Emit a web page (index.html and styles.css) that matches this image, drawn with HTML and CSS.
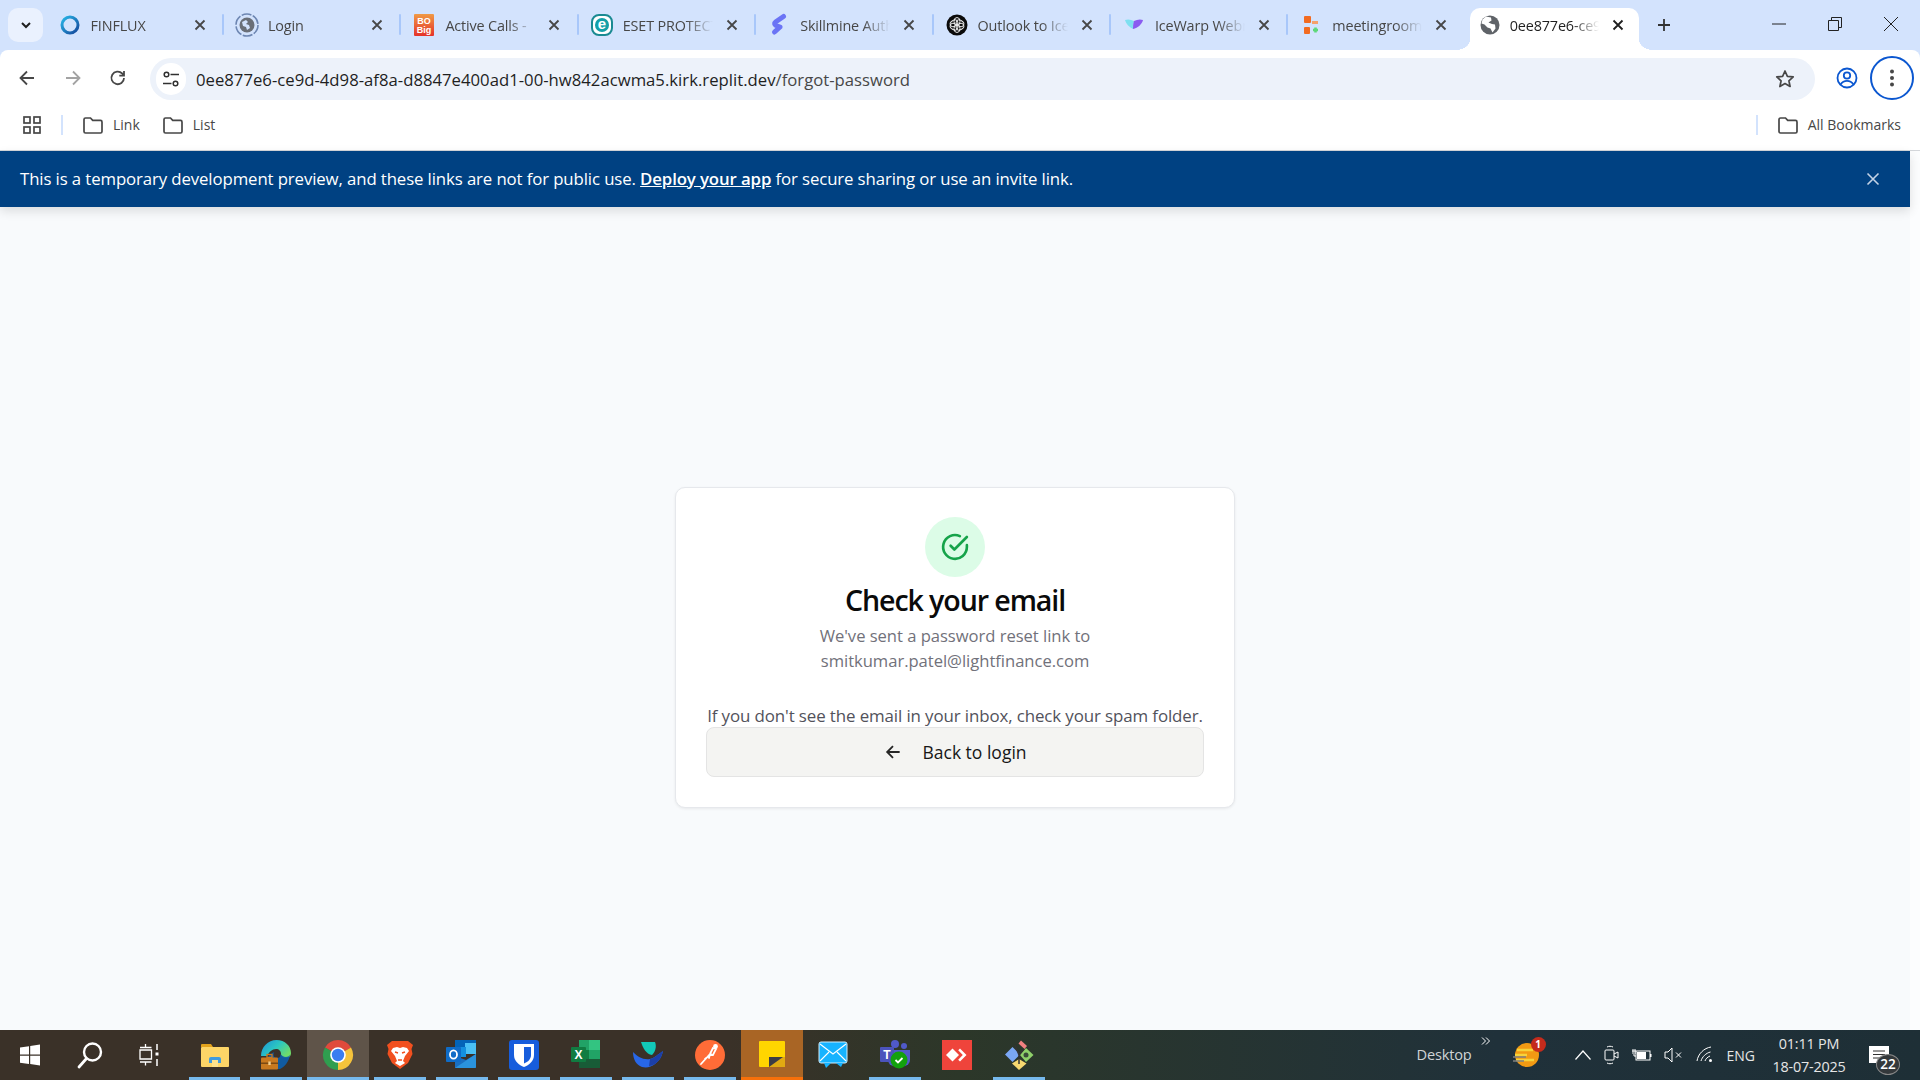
FILE: index.html
```html
<!DOCTYPE html>
<html lang="en">
<head>
<meta charset="utf-8">
<title>Check your email</title>
<link rel="stylesheet" href="styles.css">
</head>
<body>
<svg class="defs" width="0" height="0" aria-hidden="true">
  <defs>
    <symbol id="x" viewBox="0 0 16 16"><path d="M3.5 3.5l9 9M12.5 3.5l-9 9" fill="none" stroke="currentColor" stroke-width="1.8"/></symbol>
    <symbol id="folder" viewBox="0 0 22 20"><path d="M2 4.5a1.5 1.5 0 0 1 1.5-1.5h5l2.2 2.4h7.8a1.5 1.5 0 0 1 1.5 1.5v9.6a1.5 1.5 0 0 1-1.5 1.5h-15a1.5 1.5 0 0 1-1.5-1.5z" fill="none" stroke="#474747" stroke-width="1.7"/></symbol>
    <linearGradient id="ff" x1="0" y1="0" x2="1" y2="1"><stop offset="0" stop-color="#27b7e8"/><stop offset="1" stop-color="#15479b"/></linearGradient>
    <linearGradient id="bo" x1="0" y1="0" x2="0" y2="1"><stop offset="0" stop-color="#f09a45"/><stop offset="1" stop-color="#e5322a"/></linearGradient>
    <linearGradient id="edge" x1="0" y1="0" x2="1" y2="0.6"><stop offset="0" stop-color="#1c8fd8"/><stop offset="0.55" stop-color="#2bc7c0"/><stop offset="1" stop-color="#6fdc6a"/></linearGradient>
  </defs>
</svg>

<header class="tabstrip">
  <button class="tab-search"><svg width="14" height="14" viewBox="0 0 14 14"><path d="M3 5l4 4 4-4" fill="none" stroke="#1f1f1f" stroke-width="2"/></svg></button>
  <div class="tab">
    <svg class="fav" viewBox="0 0 24 24"><circle cx="12" cy="12" r="8" fill="none" stroke="url(#ff)" stroke-width="3"/></svg>
    <span class="tab-title">FINFLUX</span><svg class="tab-x"><use href="#x"/></svg>
  </div>
  <div class="tab">
    <svg class="fav" viewBox="0 0 24 24"><circle cx="12" cy="12" r="11" fill="none" stroke="#6d86b2" stroke-width="1.6" stroke-dasharray="10 1.5"/><circle cx="12" cy="12" r="7.5" fill="#6a6f78"/><path d="M7 9l4-2 2 2-2 2 3 1 1 3-3 2-1-3-3-1z" fill="#d3e3fd"/></svg>
    <span class="tab-title">Login</span><svg class="tab-x"><use href="#x"/></svg>
  </div>
  <div class="tab">
    <svg class="fav" viewBox="0 0 24 24"><rect x="2" y="1" width="20" height="22" rx="1" fill="url(#bo)"/><text class="bo-text" x="12" y="10.500">BO</text><text class="bo-text" x="12" y="19.500">Big</text></svg>
    <span class="tab-title">Active Calls -</span><svg class="tab-x"><use href="#x"/></svg>
  </div>
  <div class="tab">
    <svg class="fav" viewBox="0 0 24 24"><rect x="2" y="2" width="20" height="20" rx="7" fill="#fff" stroke="#1a8a92" stroke-width="2"/><circle cx="12" cy="12" r="7" fill="#14a0a8"/><text class="eset-text" x="12" y="16">e</text></svg>
    <span class="tab-title">ESET PROTECT</span><svg class="tab-x"><use href="#x"/></svg>
  </div>
  <div class="tab">
    <svg class="fav" viewBox="0 0 24 24"><path d="M16.500 3.500L8.500 9c-1.500 1-1 2.500.5 3.500l4 1.500-5.500 5" fill="none" stroke="#6b74f5" stroke-width="5" stroke-linecap="round" stroke-linejoin="round"/></svg>
    <span class="tab-title">Skillmine Authentication</span><svg class="tab-x"><use href="#x"/></svg>
  </div>
  <div class="tab">
    <svg class="fav" viewBox="0 0 24 24"><circle cx="12" cy="12" r="10.500" fill="#0b0b0b"/><g fill="none" stroke="#e8e8e8" stroke-width="1"><ellipse cx="12" cy="8.500" rx="3" ry="4"/><ellipse cx="12" cy="15.500" rx="3" ry="4"/><ellipse cx="9" cy="10.300" rx="3" ry="4" transform="rotate(60 9 10.300)"/><ellipse cx="15" cy="13.700" rx="3" ry="4" transform="rotate(60 15 13.700)"/><ellipse cx="15" cy="10.300" rx="3" ry="4" transform="rotate(-60 15 10.300)"/><ellipse cx="9" cy="13.700" rx="3" ry="4" transform="rotate(-60 9 13.700)"/></g></svg>
    <span class="tab-title">Outlook to IceWarp</span><svg class="tab-x"><use href="#x"/></svg>
  </div>
  <div class="tab">
    <svg class="fav" viewBox="0 0 24 24"><path d="M3 7c3-1 6-.5 9 1l-1 8C7 14 4 11 3 7z" fill="#7ee0f0"/><path d="M21 7c-3-1-6-.5-9 1-1 3-1 6-1 8 5-1 9-5 10-9z" fill="#8a5cf0"/></svg>
    <span class="tab-title">IceWarp Webmail</span><svg class="tab-x"><use href="#x"/></svg>
  </div>
  <div class="tab tab-last">
    <svg class="fav" viewBox="0 0 24 24"><rect x="5" y="3" width="7" height="7" rx="1" fill="#f26b21"/><rect x="13" y="8" width="6" height="3" fill="#f5a06b"/><rect x="5" y="14" width="6" height="7" rx="1" fill="#f26b21"/><path d="M14 17h5M16.500 14.500v5" stroke="#5dd879" stroke-width="2.600"/></svg>
    <span class="tab-title">meetingroom</span><svg class="tab-x"><use href="#x"/></svg>
  </div>
  <div class="tab tab-active">
    <svg class="fav" viewBox="0 0 24 24"><circle cx="12" cy="12" r="9.500" fill="#5f6368"/><path d="M8 3.500l5 1 .5 3-3 2 3.500 1.500 3 .5.5 4-3 4-2-4-3-1-3-3-3-1 1-4z" fill="#fff"/></svg>
    <span class="tab-title">0ee877e6-ce9d-4d98</span><svg class="tab-x"><use href="#x"/></svg>
  </div>
  <button class="new-tab"><svg width="16" height="16" viewBox="0 0 16 16"><path d="M8 2v12M2 8h12" stroke="#333" stroke-width="1.800"/></svg></button>
  <div class="win-controls">
    <svg width="14" height="14" viewBox="0 0 14 14"><path d="M0 7h14" stroke="#222" stroke-width="1"/></svg>
    <svg width="14" height="14" viewBox="0 0 14 14"><path d="M.5 3.500h10v10H.5zM3.500 3.500V.5h10v10h-3" fill="none" stroke="#222" stroke-width="1"/></svg>
    <svg width="16" height="16" viewBox="0 0 16 16"><path d="M1 1l14 14M15 1L1 15" stroke="#222" stroke-width="1"/></svg>
  </div>
</header>

<nav class="toolbar">
  <div class="nav-btns">
    <svg width="20" height="20" viewBox="0 0 20 20"><path d="M17 10H4M10 3.500L3.500 10l6.500 6.500" fill="none" stroke="#474747" stroke-width="1.800"/></svg>
    <svg width="20" height="20" viewBox="0 0 20 20"><path d="M3 10h13M10 3.500l6.500 6.500-6.500 6.500" fill="none" stroke="#a3a3a3" stroke-width="1.800"/></svg>
    <svg width="20" height="20" viewBox="0 0 20 20"><path d="M16 10a6.300 6.300 0 1 1-1.800-4.500L16 7.500M16 3v4.700h-4.700" fill="none" stroke="#474747" stroke-width="1.800"/></svg>
  </div>
  <div class="omnibox">
    <span class="site-chip"><svg width="18" height="18" viewBox="0 0 18 18"><g fill="none" stroke="#303030" stroke-width="1.500"><circle cx="4.500" cy="4.500" r="2.300"/><path d="M8.500 4.500H17M1 13.500h8.500"/><circle cx="13.500" cy="13.500" r="2.300"/></g></svg></span>
    <span class="url">0ee877e6-ce9d-4d98-af8a-d8847e400ad1-00-hw842acwma5.kirk.replit.dev<span class="url-path">/forgot-password</span></span>
    <svg class="star" width="22" height="22" viewBox="0 0 22 22"><path d="M11 3l2.400 5.300 5.800.6-4.300 3.900 1.200 5.700L11 15.600l-5.100 2.900 1.200-5.700-4.300-3.900 5.800-.6z" fill="none" stroke="#474747" stroke-width="1.700" stroke-linejoin="round"/></svg>
  </div>
  <svg class="profile" width="24" height="24" viewBox="0 0 24 24"><g fill="none" stroke="#0b57d0" stroke-width="1.800"><circle cx="12" cy="12" r="9.500"/><circle cx="12" cy="9.500" r="3.200"/><path d="M5.500 18.500c2-3 4-3.700 6.500-3.700s4.500.7 6.500 3.700"/></g></svg>
  <button class="menu-btn"><svg width="6" height="20" viewBox="0 0 6 20"><circle cx="3" cy="3.500" r="2" fill="#474747"/><circle cx="3" cy="10" r="2" fill="#474747"/><circle cx="3" cy="16.500" r="2" fill="#474747"/></svg></button>
</nav>

<div class="bookmarks">
  <svg width="20" height="20" viewBox="0 0 20 20" class="apps"><g fill="none" stroke="#474747" stroke-width="1.700"><rect x="2" y="2" width="6" height="6"/><rect x="12" y="2" width="6" height="6"/><rect x="2" y="12" width="6" height="6"/><rect x="12" y="12" width="6" height="6"/></g></svg>
  <span class="bm-sep"></span>
  <span class="bm"><svg class="bm-folder"><use href="#folder"/></svg><span class="bm-label">Link</span></span>
  <span class="bm"><svg class="bm-folder"><use href="#folder"/></svg><span class="bm-label">List</span></span>
  <span class="bm-sep bm-sep-right"></span>
  <span class="bm bm-all"><svg class="bm-folder"><use href="#folder"/></svg><span class="bm-label">All Bookmarks</span></span>
</div>

<div class="viewport">
  <div class="page">
    <div class="banner">
      <p>This is a temporary development preview, and these links are not for public use. <a href="#">Deploy your app</a> for secure sharing or use an invite link.</p>
      <svg width="16" height="16" viewBox="0 0 16 16"><path d="M2.500 2.500l11 11M13.500 2.500l-11 11" stroke="#c3d3e6" stroke-width="1.600"/></svg>
    </div>
    <main class="main">
      <section class="card">
        <div class="check"><svg width="30" height="30" viewBox="0 0 24 24" fill="none" stroke="#16a34a" stroke-width="2.100" stroke-linecap="round" stroke-linejoin="round"><path d="M21.500 10.500V12a9.500 9.500 0 1 1-5.600-8.700"/><path d="M8.500 11l3 3 10-10"/></svg></div>
        <h1>Check your email</h1>
        <p class="sub">We've sent a password reset link to<br>smitkumar.patel@lightfinance.com</p>
        <p class="hint">If you don't see the email in your inbox, check your spam folder.</p>
        <button class="back"><svg width="20" height="20" viewBox="0 0 24 24" fill="none" stroke="#262626" stroke-width="2.200"><path d="M20 12H5M12 5l-7 7 7 7"/></svg><span>Back to login</span></button>
      </section>
    </main>
  </div>
  <div class="scroll-gutter"></div>
</div>

<footer class="taskbar">
  <div class="tb-sys">
    <svg width="24" height="24" viewBox="0 0 24 24"><path d="M2 4.500l9-1.300V11.500H2zM12.200 3L22 1.500V11.500h-9.800zM2 12.700h9v8.300l-9-1.300zM12.200 12.700H22v9.800L12.200 21z" fill="#fff"/></svg>
    <svg width="30" height="30" viewBox="0 0 30 30"><circle cx="17.500" cy="12" r="8.500" fill="none" stroke="#fff" stroke-width="2.400"/><path d="M11.500 18.500L4 27" stroke="#fff" stroke-width="2.800" stroke-linecap="round"/></svg>
    <svg width="24" height="24" viewBox="0 0 24 24"><g fill="none" stroke="#fff" stroke-width="1.300"><path d="M2 4.500h11.500M7.500 4.500V1M2 7h11.500v9H2zM2 19h11.500M7.500 19v3.500"/></g><path d="M19 1v6M19 16v7" stroke="#fff" stroke-width="1.500"/><rect x="17.500" y="9.500" width="3" height="3" fill="#fff"/></svg>
  </div>
  <div class="tb-apps">
    <div class="tb-app on"><svg class="tb-icon" viewBox="0 0 32 32"><path d="M2 6a1 1 0 0 1 1-1h9l2 3H2z" fill="#e2a21c"/><rect x="2" y="8" width="28" height="20" rx="1" fill="#fdd567"/><path d="M10 24v-4a2 2 0 0 1 2-2h8a2 2 0 0 1 2 2v4h-3.500v4h-5v-4z" fill="#3f9bdf"/><rect x="13" y="21" width="6" height="7" fill="#fde28c"/></svg></div>
    <div class="tb-app on"><svg class="tb-icon" viewBox="0 0 32 32"><path d="M1 17C1 8 8 1 16.500 1 25 1 31 7 31 14c0 3-2 5-5 5-3.500 0-5-2-5-4 0-3-2-5-5-5-4 0-7 3-9 7z" fill="url(#edge)"/><path d="M7 20c3-6 8-8 12-7 3 6 9 6 11 3-1 6-5 12-10 14H14z" fill="#0f5ea8" opacity=".95"/><circle cx="17" cy="15.500" r="3.500" fill="#3a3128"/><rect x="1" y="18.500" width="17" height="12" rx="1" fill="#c8791f"/><rect x="1" y="23.500" width="17" height="1.500" fill="#7c4a12"/><rect x="7" y="15.500" width="5" height="3" fill="none" stroke="#c8791f" stroke-width="1.300"/><rect x="8.300" y="22.500" width="2.400" height="3.500" fill="#f2cf8e"/></svg></div>
    <div class="tb-app on active"><svg class="tb-icon" viewBox="0 0 32 32"><path d="M16 16L3 8.500A15 15 0 0 1 29 8.500z" fill="#e04a3c"/><path d="M16 16L29 8.500A15 15 0 0 1 16 31z" fill="#f5c33b"/><path d="M16 16L16 31A15 15 0 0 1 3 8.500z" fill="#2f9e4f"/><circle cx="16" cy="16" r="7.800" fill="#fff"/><circle cx="16" cy="16" r="6.200" fill="#3b7df0"/></svg></div>
    <div class="tb-app on"><svg class="tb-icon" viewBox="0 0 32 32"><path d="M8 2h16l5 4-1.500 4 1 5-4.500 9-8 6-8-6-4.500-9 1-5L3 6z" fill="#f1501f"/><path d="M9 9l4-1 3 1 3-1 4 1 2 3-4 5-2 5 2 2-5 3-5-3 2-2-2-5-4-5z" fill="#fff"/><path d="M11 13l3 1M21 13l-3 1M14 21h4" stroke="#f1501f" stroke-width="1.500"/></svg></div>
    <div class="tb-app on"><svg class="tb-icon" viewBox="0 0 32 32"><rect x="9" y="1" width="21" height="8" fill="#0364b8"/><rect x="19" y="4" width="11" height="11" fill="#4ac0f5"/><rect x="9" y="8" width="11" height="10" fill="#1490df"/><path d="M9 17l11 4 10-6v13a1 1 0 0 1-1 1H9z" fill="#1a6fc0"/><path d="M30 15L9 29h20a1 1 0 0 0 1-1z" fill="#2a93dd"/><rect x="0" y="8" width="15" height="15" rx="1" fill="#0f6cc7"/><ellipse cx="7.500" cy="15.500" rx="3.500" ry="4.200" fill="none" stroke="#fff" stroke-width="1.800"/></svg></div>
    <div class="tb-app on"><svg class="tb-icon" viewBox="0 0 32 32"><rect x="1" y="1" width="30" height="30" rx="3" fill="#175ddc"/><path d="M6 5h20v11c0 6-5 10-10 12C11 26 6 22 6 16z" fill="#fff"/><path d="M16 8h7v8c0 4-3 7-7 8.500z" fill="#175ddc"/></svg></div>
    <div class="tb-app on"><svg class="tb-icon" viewBox="0 0 32 32"><rect x="9" y="1" width="11" height="10" fill="#21a366"/><rect x="19" y="1" width="11" height="10" fill="#33c481"/><rect x="9" y="11" width="11" height="9" fill="#107c41"/><rect x="19" y="11" width="11" height="9" fill="#21a366"/><rect x="9" y="20" width="21" height="9" fill="#185c37"/><rect x="1" y="8" width="15" height="15" rx="1" fill="#107c41"/><text class="tile-text" x="8.500" y="20">X</text></svg></div>
    <div class="tb-app on"><svg class="tb-icon" viewBox="0 0 32 32"><path d="M9 3h14c2 5 0 10-3 13-6-1-9-7-11-13z" fill="#12c9b8"/><path d="M1 13c5 5 10 8 17 7 5-1 8-5 13-8-1 5-3 9-8 13-4 3-8 4-13 3C4 26 1 20 1 13z" fill="#2867e8"/><path d="M18 20c5-1 8-5 13-8-1 5-3 9-8 13-2 1-4 2-6 2z" fill="#1c3fa8"/></svg></div>
    <div class="tb-app on"><svg class="tb-icon" viewBox="0 0 32 32"><circle cx="16" cy="16" r="15" fill="#ff6c37"/><path d="M7 25l9-10 3-6M19 9l3 1-3 6-3-1M16 15l-1 4M11 20l6-5" fill="none" stroke="#fff" stroke-width="1.800" stroke-linecap="round"/><circle cx="21.500" cy="7.500" r="2.400" fill="#fff"/></svg></div>
    <div class="tb-app sticky"><svg class="tb-icon" viewBox="0 0 32 32"><rect x="3" y="2" width="26" height="26" rx="1" fill="#ffd500"/><path d="M13 28V19a1 1 0 0 1 1-1h15v10z" fill="#e1aa12"/><path d="M13 28V18h14z" fill="#3c3c44"/></svg></div>
    <div class="tb-app"><svg class="tb-icon" viewBox="0 0 32 32"><rect x="2" y="3" width="28" height="21" rx="2" fill="#16b3ff" stroke="#cfeeff"/><path d="M3 5l13 10L29 5M3 22l9-9M29 22l-9-9" fill="none" stroke="#fff" stroke-width="1.100"/><path d="M7 24h7l-5 5zM19 24h7l-2 4z" fill="#16b3ff"/></svg></div>
    <div class="tb-app on"><svg class="tb-icon" viewBox="0 0 32 32"><circle cx="16" cy="5" r="4" fill="#5059c9"/><circle cx="25" cy="7" r="3" fill="#5059c9"/><path d="M9 11h22v10a6 6 0 0 1-6 6H15a6 6 0 0 1-6-6z" fill="#5059c9"/><rect x="1" y="8" width="14" height="15" rx="1" fill="#4b53bc"/><text class="tile-text" x="8" y="20">T</text><circle cx="20" cy="21" r="8.500" fill="#13a10e"/><path d="M16.500 21l2.500 2.500 4.500-4.500" fill="none" stroke="#fff" stroke-width="1.800"/></svg></div>
    <div class="tb-app"><svg class="tb-icon" viewBox="0 0 32 32"><rect x="1" y="1" width="30" height="30" fill="#ef443b"/><path d="M11.500 9.500L18 16l-6.500 6.500L5 16z" fill="#fff"/><path d="M19 9.500L25.500 16 19 22.500l-1.800-1.800L21.800 16l-4.600-4.700z" fill="#fff"/></svg></div>
    <div class="tb-app on"><svg class="tb-icon" viewBox="0 0 32 32"><path d="M9.500 8L17 15.500 9.500 23 2 15.500z" fill="#7aa7f5"/><path d="M18 1.500l6 5.500-2.500 3-6-5.500z" fill="#f08080"/><path d="M23 9l7.500 7L23 23l-6-7z" fill="#8ecf6a"/><circle cx="23" cy="16" r="2.500" fill="#3a4a3a"/><path d="M16 20l7.500 4.500L16 31l-7-6.500z" fill="#f7d970"/><path d="M12 6l4 10v9M16 16l5-6" fill="none" stroke="#333" stroke-width="1.500"/></svg></div>
  </div>
  <div class="tb-tray">
    <span class="tb-desktop">Desktop</span>
    <span class="tb-more"><svg width="10" height="8" viewBox="0 0 10 8"><path d="M1 .5L4.500 4 1 7.500M5 .5L8.500 4 5 7.500" fill="none" stroke="#fff" stroke-width="1"/></svg></span>
    <span class="tb-weather">
      <svg width="30" height="30" viewBox="0 0 30 30"><circle cx="15" cy="15" r="12" fill="#f29a13"/><path d="M5 10h16M3 15h12M4 20h18" stroke="#f7d33a" stroke-width="2.500"/><path d="M1 17h13M1 21h11" stroke="#7f7f7f" stroke-width="1.500"/></svg>
      <span class="badge">1</span>
    </span>
    <span class="tray-icons">
      <svg width="18" height="12" viewBox="0 0 18 12"><path d="M1.500 10.500L9 2l7.500 8.500" fill="none" stroke="#fff" stroke-width="1.200"/></svg>
      <svg width="16" height="20" viewBox="0 0 16 20"><g fill="none" stroke="#fff" stroke-width="1"><rect x="1" y="5" width="9" height="10" rx="1"/><path d="M10 9l4-2v6l-4-2M3 2c2-1 4-1 6 0M3 18c2 1 4 1 6 0"/></g></svg>
      <svg width="20" height="14" viewBox="0 0 20 14"><g fill="none" stroke="#fff"><rect x="4" y="3" width="14" height="9"/><path d="M1 1v5M3 1v5M0 3h4M2 6v2h2"/></g><rect x="5" y="4" width="9" height="7" fill="#fff"/><rect x="18" y="6" width="1.500" height="3" fill="#fff"/></svg>
      <svg width="20" height="16" viewBox="0 0 20 16"><g fill="none" stroke="#fff"><path d="M1 5h3l4-4v14l-4-4H1zM12 5.500l5 5M17 5.500l-5 5"/></g></svg>
      <svg width="18" height="18" viewBox="0 0 18 18"><g fill="none" stroke="#fff"><path d="M1 15C2 8 8 2 15 1M5 15c1-4 5-8 9.500-9M9 15c.5-2 2.500-4 5-5"/></g><circle cx="14.500" cy="14.500" r="1.500" fill="#fff"/></svg>
    </span>
    <span class="tb-lang">ENG</span>
    <span class="tb-clock"><span>01:11 PM</span><span>18-07-2025</span></span>
    <span class="tb-notif">
      <svg width="20" height="18" viewBox="0 0 20 18"><rect width="20" height="17" fill="#fff"/><path d="M4 5h12M4 8.500h12M4 12h8" stroke="#333" stroke-width="1.200"/></svg>
      <span class="notif-count">22</span>
    </span>
  </div>
</footer>
</body>
</html>
```

FILE: styles.css
```css
* { box-sizing: border-box; }
html, body { margin: 0; height: 100%; }
body {
  width: 1920px;
  height: 1080px;
  overflow: hidden;
  display: flex;
  flex-direction: column;
  background: #d3e3fd;
  font-family: "Open Sans", "Noto Sans", sans-serif;
  color: #1f1f1f;
}
button { border: 0; background: none; padding: 0; font: inherit; color: inherit; }
.defs { position: absolute; }

/* svg favicon text */
.bo-text { font-size: 9px; font-weight: 700; fill: #fff; text-anchor: middle; font-family: "Liberation Sans", sans-serif; }
.eset-text { font-size: 15px; font-weight: 700; fill: #fff; text-anchor: middle; font-family: "Liberation Sans", sans-serif; }
.tile-text { font-size: 12px; font-weight: 700; fill: #fff; text-anchor: middle; font-family: "Liberation Sans", sans-serif; }

/* tab strip */
.tabstrip { height: 50px; flex: none; display: flex; align-items: stretch; padding-left: 8px; background: #d3e3fd; }
.tab-search { width: 35px; height: 34px; margin: 8px 3.6px 0 0; background: #eaf1fe; border-radius: 10px; display: flex; align-items: center; justify-content: center; flex: none; }
.tab { position: relative; width: 177.4px; flex: none; height: 50px; display: flex; align-items: center; padding-left: 11px; }
.tab::after { content: ""; position: absolute; right: 0; top: 14px; width: 2px; height: 21px; background: #a8c7fa; border-radius: 1px; }
.tab-last::after { content: none; }
.fav { width: 24px; height: 24px; flex: none; margin-right: 9px; }
.tab-title { width: 90px; margin-right: 11px; flex: none; overflow: hidden; white-space: nowrap; font-size: 14.4px; letter-spacing: -0.15px; color: #474747; -webkit-mask-image: linear-gradient(90deg, #000 70%, transparent 100%); mask-image: linear-gradient(90deg, #000 70%, transparent 100%); }
.tab-x { width: 16px; height: 16px; flex: none; color: #474747; }
.tab-active { width: 169px; height: 42px; margin: 8px 0 0 4px; padding: 0 0 8px 8px; background: #fff; border-radius: 10px 10px 0 0; }
.tab-active .tab-title { color: #1f1f1f; width: 89px; }
.tab-active .tab-x { color: #1f1f1f; }
.tab-active .fav { margin-right: 8px; }
.tab-active::before { content: ""; position: absolute; left: -14px; bottom: 0; width: 14px; height: 10px; background: radial-gradient(ellipse 14px 10px at 0 0, transparent 98%, #fff 100%); }
.tab-active::after { right: -14px; top: auto; bottom: 0; width: 14px; height: 10px; border-radius: 0; background: radial-gradient(ellipse 14px 10px at 100% 0, transparent 98%, #fff 100%); }
.new-tab { width: 36px; height: 36px; margin: 7px 0 0 7px; display: flex; align-items: center; justify-content: center; flex: none; }
.win-controls { margin-left: auto; width: 256px; display: flex; align-items: center; padding: 0 21px 2px 0; justify-content: flex-end; gap: 41.5px; }

/* toolbar */
.toolbar { height: 50px; flex: none; background: #fff; border-radius: 8px 8px 0 0; display: flex; align-items: center; padding: 6px 6px 0 17px; }
.nav-btns { display: flex; gap: 25.5px; align-items: center; width: 133px; flex: none; }
.omnibox { width: 1665px; height: 42px; flex: none; margin-top: 2px; background: #edf2fa; border-radius: 21px; display: flex; align-items: center; padding: 0 19px 0 6px; }
.site-chip { width: 30px; height: 32px; border-radius: 16px; background: #fff; display: flex; align-items: center; justify-content: center; flex: none; margin-right: 10px; }
.url { flex: 1; font-size: 16.7px; letter-spacing: 0.01px; color: #1f1f1f; white-space: nowrap; }
.url-path { color: #474747; }
.star { flex: none; }
.profile { margin-left: 20px; flex: none; }
.menu-btn { width: 44px; height: 44px; margin-left: 11px; border: 2.5px solid #0b57d0; border-radius: 50%; display: flex; align-items: center; justify-content: center; flex: none; }

/* bookmarks */
.bookmarks { height: 51px; flex: none; background: #fff; border-bottom: 1px solid #d4d7db; display: flex; align-items: center; padding: 0 19px 0 22px; font-size: 14px; letter-spacing: 0; color: #474747; }
.apps { flex: none; margin-right: 19px; }
.bm-sep { width: 2px; height: 20px; background: #d3e3fd; flex: none; margin-right: 19px; }
.bm { display: flex; align-items: center; gap: 9px; margin-right: 22px; }
.bm-label { padding-bottom: 2px; }
.bm-folder { width: 22px; height: 20px; flex: none; }
.bm-sep-right { margin-left: auto; margin-right: 19px; }
.bm-all { margin-right: 0; }

/* page */
.viewport { flex: 1; min-height: 0; display: flex; background: #fff; }
.page { flex: 1; min-width: 0; display: flex; flex-direction: column; background: #f8fafc; }
.scroll-gutter { width: 10px; flex: none; background: #fcfdfe; }
.banner { height: 56px; flex: none; background: #004182; color: #fff; display: flex; align-items: center; justify-content: space-between; padding: 0 29px 0 20px; box-shadow: 0 4px 10px rgba(0,0,0,.12); font-size: 16.8px; letter-spacing: -0.11px; position: relative; }
.banner p { margin: 0; padding-bottom: 2px; }
.banner a { color: #fff; font-weight: 600; }
.main { flex: 1; display: flex; align-items: center; justify-content: center; padding-top: 58px; }
.card { width: 560px; height: 321px; background: #fff; border: 1px solid #e6e8ec; border-radius: 10px; box-shadow: 0 1px 3px rgba(0,0,0,.07); padding: 29px 30px 31px; display: flex; flex-direction: column; align-items: center; }
.check { width: 60px; height: 60px; border-radius: 50%; background: #dcfce7; display: flex; align-items: center; justify-content: center; flex: none; }
h1 { margin: 2px 0 0; font-size: 28.6px; line-height: 42px; font-weight: 600; letter-spacing: -1.1px; color: #0a0a0a; }
.sub { margin: 2px 0 0; font-size: 16.6px; line-height: 25px; letter-spacing: -0.03px; text-align: center; color: #71717a; }
.hint { margin: 32px 0 0; width: 100%; font-size: 16.9px; line-height: 22px; letter-spacing: -0.11px; text-align: center; color: #52525b; white-space: nowrap; }
.back { width: 100%; height: 50px; margin-top: auto; flex: none; background: #f4f4f2; border: 1px solid #e4e4e4; border-radius: 8px; display: flex; align-items: center; justify-content: center; gap: 19px; font-size: 17.5px; font-weight: 500; letter-spacing: 0; color: #171717; }

/* taskbar */
.taskbar { height: 50px; flex: none; display: flex; align-items: stretch; background: linear-gradient(90deg, #3a3128 0, #3a3128 38%, #2c3729 50%, #20313a 78%, #1e2f36 100%); color: #e6e6e6; }
.tb-sys { width: 183.6px; flex: none; display: grid; grid-template-columns: repeat(3, 60px); justify-items: center; align-items: center; }
.tb-apps { display: flex; flex: none; }
.tb-app { position: relative; width: 61.9px; height: 50px; flex: none; display: flex; align-items: center; justify-content: center; }
.tb-icon { width: 32px; height: 32px; }
.tb-app.on::after { content: ""; position: absolute; left: 5px; right: 5px; bottom: 0; height: 3px; background: #76b9ed; }
.tb-app.active { background: #5f5449; }
.tb-app.active::after { left: 0; right: 0; }
.tb-app.sticky { background: #a96525; }
.tb-app.sticky::after { content: ""; position: absolute; left: 0; right: 0; bottom: 0; height: 3px; background: #f7700a; }
.tb-tray { margin-left: auto; display: flex; align-items: center; }
.tb-desktop { padding-bottom: 2px; font-size: 14.6px; letter-spacing: -0.2px; color: #cfd4d6; }
.tb-more { align-self: flex-start; margin: 7px 0 0 9px; line-height: 0; }
.tb-weather { position: relative; margin-left: 21px; width: 30px; height: 30px; }
.badge { position: absolute; top: -3px; right: -4px; width: 15px; height: 15px; border-radius: 50%; background: #c42b1c; color: #fff; font-size: 10px; font-weight: 700; line-height: 15px; text-align: center; }
.tray-icons { display: flex; align-items: center; gap: 12px; margin-left: 32px; }
.tb-lang { margin-left: 13px; font-size: 14px; letter-spacing: 0; color: #e6e6e6; }
.tb-clock { width: 92px; margin-left: 8px; display: flex; flex-direction: column; align-items: center; font-size: 14.4px; line-height: 23px; letter-spacing: -0.2px; }
.tb-notif { position: relative; width: 40px; margin: 0 14px 0 11px; padding-left: 3px; display: flex; align-items: center; }
.notif-count { position: absolute; left: 10px; top: 8px; width: 24px; height: 21px; border-radius: 50%; background: #33383b; border: 1px solid #888; color: #fff; font-size: 13.5px; font-weight: 600; line-height: 19px; text-align: center; }
```
